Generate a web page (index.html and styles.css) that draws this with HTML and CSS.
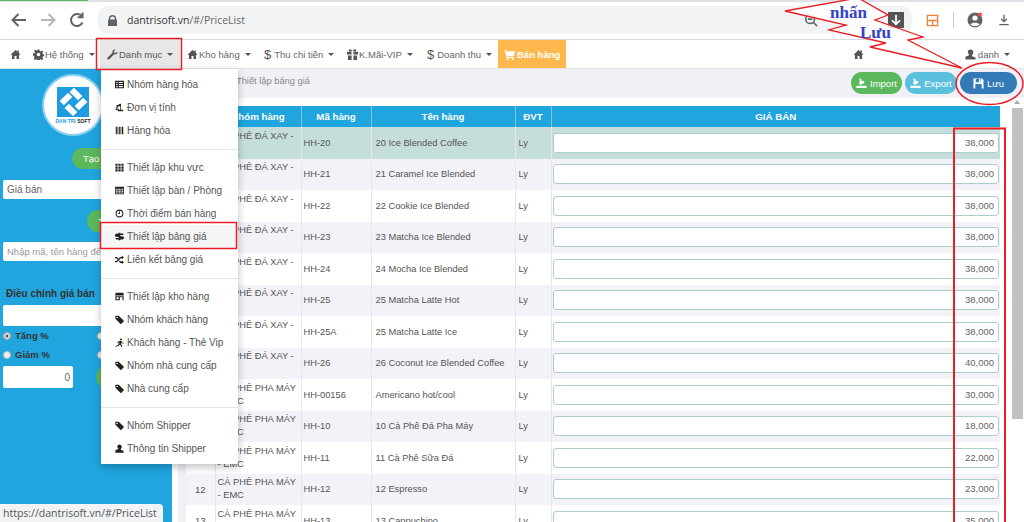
FILE: index.html
```html
<!DOCTYPE html>
<html lang="vi">
<head>
<meta charset="utf-8">
<title>PriceList</title>
<link rel="stylesheet" href="styles.css">
</head>
<body>
<svg class="defs" width="0" height="0">
  <symbol id="i-home" viewBox="0 0 12 12"><path d="M6 1 .5 6.200h1.600V11h2.800V7.600h2.200V11h2.800V6.200h1.600L9.600 4V1.600H8.200v1.100z"/></symbol>
  <symbol id="i-gear" viewBox="0 0 12 12"><path fill-rule="evenodd" d="M5 .5h2l.3 1.600 1.100.5 1.400-.9 1.400 1.400-.9 1.400.5 1.100 1.600.3v2l-1.600.3-.5 1.100.9 1.400-1.400 1.400-1.400-.9-1.100.5-.3 1.600H5l-.3-1.600-1.100-.5-1.400.9-1.400-1.400.9-1.400-.5-1.100L0 7V5l1.600-.3.5-1.100-.9-1.400 1.400-1.400 1.400.9 1.100-.5zM6 4a2 2 0 1 0 0 4 2 2 0 0 0 0-4z"/></symbol>
  <symbol id="i-wrench" viewBox="0 0 12 12"><path d="M11.500 2.600 9.600 4.400 8 4 7.600 2.400 9.400.6C7.800 0 6 1 5.900 2.800c0 .5 0 .9.2 1.200L.7 9.400c-.5.5-.5 1.200 0 1.700s1.200.5 1.700 0L7.900 5.800c1.900.6 4.200-1.200 3.600-3.200z"/></symbol>
  <symbol id="i-gift" viewBox="0 0 12 12"><path d="M0 3h5v3H0zM7 3h5v3H7zM1 7h4v5H1zM7 7h4v5H7zM2 .5h2.500L6 2.500 7.500.5H10v2H2z"/></symbol>
  <symbol id="i-cart" viewBox="0 0 12 12"><path d="M0 1h2l.4 1.500H12l-1.200 5H3.600l.3 1H10.500V9.800H2.800L1.100 2.300H0z"/><circle cx="4" cy="10.800" r="1.100"/><circle cx="9.500" cy="10.800" r="1.100"/></symbol>
  <symbol id="i-user" viewBox="0 0 12 12"><path d="M6 .5c1.900 0 3 1.400 3 3.300 0 1.300-.6 2.400-1.300 3v1l3.800 1.600v2.100H.5V8.400l3.800-1.600v-1C3.600 5.200 3 4.100 3 3.800 3 1.900 4.100.5 6 .5z"/></symbol>
  <symbol id="i-list" viewBox="0 0 12 12"><path fill-rule="evenodd" d="M0 1h12v10H0zM1.500 2.500v1.500h2V2.500zm3.500 0v1.500h5.500V2.500zM1.500 5.300v1.500h2V5.300zm3.500 0v1.500h5.500V5.300zM1.500 8v1.500h2V8zM5 8v1.500h5.500V8z"/></symbol>
  <symbol id="i-scale" viewBox="0 0 12 12"><path d="M7 1h1v8h3v2H4V9h3V4L3.500 5l1.500 3.500C5 10 1 10 .5 8.500L2.300 4.500 1.500 3.500zM2.800 5.500 1.700 8.200h2.200z"/></symbol>
  <symbol id="i-barcode" viewBox="0 0 12 12"><path d="M1 1h1.500v10H1zM3.300 1h.8v10h-.8zM5 1h1.500v10H5zM7.300 1h.8v10h-.8zM9 1h2v10H9z"/></symbol>
  <symbol id="i-grid" viewBox="0 0 12 12"><path d="M.5 1h3v2.800h-3zM4.500 1h3v2.800h-3zM8.500 1h3v2.800h-3zM.5 4.700h3v2.800h-3zM4.500 4.700h3v2.800h-3zM8.500 4.700h3v2.800h-3zM.5 8.400h3v2.800h-3zM4.500 8.400h3v2.800h-3zM8.500 8.400h3v2.800h-3z"/></symbol>
  <symbol id="i-table" viewBox="0 0 12 12"><path fill-rule="evenodd" d="M0 1h12v10H0zM1 3.500V5h2.500V3.500zm3.500 0V5h3V3.500zm4 0V5H11V3.500zM1 6v1.500h2.500V6zm3.500 0v1.500h3V6zm4 0v1.500H11V6zM1 8.500V10h2.500V8.500zm3.500 0V10h3V8.500zm4 0V10H11V8.500z"/></symbol>
  <symbol id="i-clock" viewBox="0 0 12 12"><path fill-rule="evenodd" d="M6 .8a5.200 5.200 0 1 1 0 10.400A5.200 5.200 0 0 1 6 .8zm0 1.400a3.800 3.800 0 1 0 0 7.600 3.800 3.800 0 0 0 0-7.600zM5.400 3h1.200v3.600H3.800V5.500h1.600z"/></symbol>
  <symbol id="i-usd" viewBox="0 0 12 12"><path fill-rule="evenodd" d="M5 1h2v1.100h2.500c1.200 0 2 .8 2 1.900H7v1.500h2.500c1.500 0 2.500 1 2.500 2.200S11 10 9.500 10H7v1H5v-1H2.500C1.200 10 .5 9.200.5 8H5V6.500H2.500C1 6.500 0 5.500 0 4.300S1 2.100 2.500 2.100H5z"/></symbol>
  <symbol id="i-shuffle" viewBox="0 0 12 12"><path d="M0 2.500h2.500L4.800 5 3.700 6.200 1.900 4.300H0zM9 .8l3 2.500L9 5.800V4.300H7.800L2.500 9.700H0V7.900h1.800l5.300-5.400H9zM6.200 7.200l1.600 1.500H9V7.200l3 2.500-3 2.500v-1.500H7L5.100 8.400z"/></symbol>
  <symbol id="i-store" viewBox="0 0 12 12"><path fill-rule="evenodd" d="M1 1h10l1 3.500H0zM.5 5.500h11V11H.5zm1.500 1.500V9.500h3V7zm4.500 0V11H10V7z"/></symbol>
  <symbol id="i-tag" viewBox="0 0 12 12"><path d="M.5 1H5l6.500 6.300c.4.400.4 1 0 1.400L8.500 11.600c-.4.400-1 .4-1.400 0L.5 5zM2.800 2.200a1 1 0 1 0 0 2 1 1 0 0 0 0-2z"/></symbol>
  <symbol id="i-runner" viewBox="0 0 12 12"><path d="M8 .8a1.300 1.300 0 1 1 0 2.600A1.300 1.300 0 0 1 8 .8zM5 4h3.500l.8 1.800L11.500 6.500v1L8.500 6.800 7.800 8.300 9.500 9.500V12H8.300V10.200L6 9 4.800 10.500.5 11.500V10.500L4 9.300 6 5.300H5.500L3.800 7H2.500z"/></symbol>
  <symbol id="i-import" viewBox="0 0 12 12"><path d="M.5 8.500h11V11H.5zM3.500 1l2-.5L6.500 3.500 9 3v2.500L4.500 7.500 3 4.500l1.500-.5z"/></symbol>
  <symbol id="i-save" viewBox="0 0 12 12"><path fill-rule="evenodd" d="M.5.500h9.300L11.500 2.200v9.300H.5zM3 1v3.700h5.500V1zM2.500 6.500v5h7v-5zM6.500 1.300H8v3H6.500z"/></symbol>
</svg>

<header class="chrome">
  <div class="tabline"><span class="progress"></span></div>
  <div class="toolbar">
    <svg class="cicon" viewBox="0 0 20 20"><path d="M17 10H4M9.500 4 3.500 10l6 6" fill="none" stroke="#5f6368" stroke-width="2"/></svg>
    <svg class="cicon" viewBox="0 0 20 20"><path d="M3 10h13M10.500 4l6 6-6 6" fill="none" stroke="#b4b6b9" stroke-width="2"/></svg>
    <svg class="cicon" viewBox="0 0 20 20"><path d="M15.500 12.500a6 6 0 1 1-.6-6M15.500 2.500v4.800h-4.800" fill="none" stroke="#5f6368" stroke-width="2"/></svg>
    <div class="omnibox">
      <svg class="lock" viewBox="0 0 10 12"><path fill-rule="evenodd" d="M1 5V4a4 4 0 0 1 8 0v1h1v7H0V5zm1.500 0h5V4a2.500 2.500 0 0 0-5 0z" fill="#5f6368"/></svg>
      <span class="url">dantrisoft.vn<span class="urlpath">/#/PriceList</span></span>
      <svg class="zoomi" viewBox="0 0 16 16"><circle cx="7" cy="7" r="5" fill="none" stroke="#5f6368" stroke-width="1.800"/><path d="M10.500 10.500 15 15M4.500 7h5" stroke="#5f6368" stroke-width="1.800"/></svg>
      <span class="dl-box"><svg viewBox="0 0 16 16"><path d="M8 2v11M3.500 8.500 8 13l4.500-4.500" fill="none" stroke="#fff" stroke-width="2"/></svg></span>
    </div>
    <div class="exts">
      <svg class="ext" viewBox="0 0 14 14"><path d="M1.500 1.500h11v11h-11zM1.500 7h11M7 7v5.500" fill="none" stroke="#f4803a" stroke-width="1.500"/></svg>
      <span class="sep"></span>
      <svg class="avatar" viewBox="0 0 16 16"><circle cx="8" cy="8" r="7.500" fill="#5f6368"/><circle cx="8" cy="6" r="2.600" fill="#fff"/><path d="M3.300 12.500c1.500-2.500 7.900-2.500 9.400 0-2.500 2.300-6.900 2.300-9.400 0z" fill="#fff"/><circle cx="13" cy="2.500" r="2" fill="#f44"/></svg>
      <svg class="dlr" viewBox="0 0 14 14"><path d="M7 1v8M3.500 5.500 7 9l3.500-3.500M1.500 12.500h11" fill="none" stroke="#5f6368" stroke-width="1.500"/></svg>
    </div>
  </div>
</header>

<nav class="nav">
  <a class="nav-home"><svg class="ni"><use href="#i-home"/></svg></a>
  <a class="nav-item w-sys"><svg class="ni"><use href="#i-gear"/></svg>Hệ thống<b class="caret"></b></a>
  <a class="nav-item w-cat active"><svg class="ni"><use href="#i-wrench"/></svg>Danh mục<b class="caret"></b></a>
  <a class="nav-item w-cat"><svg class="ni"><use href="#i-home"/></svg>Kho hàng<b class="caret"></b></a>
  <a class="nav-item w-cash"><span class="dollar">$</span>Thu chi tiền<b class="caret"></b></a>
  <a class="nav-item w-vip"><svg class="ni"><use href="#i-gift"/></svg>K.Mãi-VIP<b class="caret"></b></a>
  <a class="nav-item w-rev"><span class="dollar">$</span>Doanh thu<b class="caret"></b></a>
  <a class="nav-sale"><svg class="ni"><use href="#i-cart"/></svg>Bán hàng</a>
  <div class="nav-right">
    <a class="nav-home"><svg class="ni"><use href="#i-home"/></svg></a>
    <a class="nav-user"><svg class="ni"><use href="#i-user"/></svg>danh<b class="caret"></b></a>
  </div>
</nav>

<main class="main">
  <aside class="side">
    <div class="logo">
      <div class="logo-mark">
        <svg viewBox="0 0 32 30"><g fill="#fff"><rect x="13" y="4" width="12" height="6" transform="rotate(45 19 7)"/><rect x="3" y="9" width="12" height="6" transform="rotate(-45 9 12)"/><rect x="18" y="14" width="12" height="6" transform="rotate(-45 24 17)"/><rect x="8" y="20" width="12" height="6" transform="rotate(45 14 23)"/></g></svg>
      </div>
      <span class="logo-text">DAN TRI <b>SOFT</b></span>
    </div>
    <div class="side-btn tao">Tạo bảng giá</div>
    <div class="field">Giá bán</div>
    <div class="side-btn second">Thêm</div>
    <div class="field search">Nhập mã, tên hàng để tìm</div>
    <div class="adj-title">Điều chỉnh giá bán</div>
    <div class="field blank"></div>
    <div class="radio-row"><span class="radio on"></span><span class="rlabel">Tăng %</span><span class="radio alt"></span></div>
    <div class="radio-row"><span class="radio"></span><span class="rlabel">Giảm %</span><span class="radio alt"></span></div>
    <div class="adj-row"><div class="field num">0</div><span class="go"></span></div>
  </aside>

  <section class="content">
    <div class="topband">
      <span class="crumb">Thiết lập bảng giá</span>
      <div class="actions">
        <a class="pill import"><svg class="pi"><use href="#i-import"/></svg>Import</a>
        <a class="pill export"><svg class="pi"><use href="#i-import"/></svg>Export</a>
        <a class="pill save"><svg class="pi"><use href="#i-save"/></svg>Lưu</a>
      </div>
    </div>
    <div class="table-area">
      <table class="grid">
        <colgroup><col class="c1"><col class="c2"><col class="c3"><col class="c4"><col class="c5"><col class="c6"></colgroup>
        <thead><tr><th>STT</th><th>Nhóm hàng</th><th>Mã hàng</th><th>Tên hàng</th><th>ĐVT</th><th>GIÁ BÁN</th></tr></thead>
        <tbody>
          <tr class="sel"><td class="n">1</td><td class="g">CÀ PHÊ ĐÁ XAY - EMC</td><td class="m">HH-20</td><td class="t">20 Ice Blended Coffee</td><td class="u">Ly</td><td class="p"><div class="price">38,000</div></td></tr>
          <tr><td class="n">2</td><td class="g">CÀ PHÊ ĐÁ XAY - EMC</td><td class="m">HH-21</td><td class="t">21 Caramel Ice Blended</td><td class="u">Ly</td><td class="p"><div class="price">38,000</div></td></tr>
          <tr><td class="n">3</td><td class="g">CÀ PHÊ ĐÁ XAY - EMC</td><td class="m">HH-22</td><td class="t">22 Cookie Ice Blended</td><td class="u">Ly</td><td class="p"><div class="price">38,000</div></td></tr>
          <tr><td class="n">4</td><td class="g">CÀ PHÊ ĐÁ XAY - EMC</td><td class="m">HH-23</td><td class="t">23 Matcha Ice Blended</td><td class="u">Ly</td><td class="p"><div class="price">38,000</div></td></tr>
          <tr><td class="n">5</td><td class="g">CÀ PHÊ ĐÁ XAY - EMC</td><td class="m">HH-24</td><td class="t">24 Mocha Ice Blended</td><td class="u">Ly</td><td class="p"><div class="price">38,000</div></td></tr>
          <tr><td class="n">6</td><td class="g">CÀ PHÊ ĐÁ XAY - EMC</td><td class="m">HH-25</td><td class="t">25 Matcha Latte Hot</td><td class="u">Ly</td><td class="p"><div class="price">38,000</div></td></tr>
          <tr><td class="n">7</td><td class="g">CÀ PHÊ ĐÁ XAY - EMC</td><td class="m">HH-25A</td><td class="t">25 Matcha Latte Ice</td><td class="u">Ly</td><td class="p"><div class="price">38,000</div></td></tr>
          <tr><td class="n">8</td><td class="g">CÀ PHÊ ĐÁ XAY - EMC</td><td class="m">HH-26</td><td class="t">26 Coconut Ice Blended Coffee</td><td class="u">Ly</td><td class="p"><div class="price">40,000</div></td></tr>
          <tr><td class="n">9</td><td class="g">CÀ PHÊ PHA MÁY - EMC</td><td class="m">HH-00156</td><td class="t">Americano hot/cool</td><td class="u">Ly</td><td class="p"><div class="price">30,000</div></td></tr>
          <tr><td class="n">10</td><td class="g">CÀ PHÊ PHA MÁY - EMC</td><td class="m">HH-10</td><td class="t">10 Cà Phê Đá Pha Máy</td><td class="u">Ly</td><td class="p"><div class="price">18,000</div></td></tr>
          <tr><td class="n">11</td><td class="g">CÀ PHÊ PHA MÁY - EMC</td><td class="m">HH-11</td><td class="t">11 Cà Phê Sữa Đá</td><td class="u">Ly</td><td class="p"><div class="price">22,000</div></td></tr>
          <tr><td class="n">12</td><td class="g">CÀ PHÊ PHA MÁY - EMC</td><td class="m">HH-12</td><td class="t">12 Espresso</td><td class="u">Ly</td><td class="p"><div class="price">23,000</div></td></tr>
          <tr><td class="n">13</td><td class="g">CÀ PHÊ PHA MÁY - EMC</td><td class="m">HH-13</td><td class="t">13 Cappuchino</td><td class="u">Ly</td><td class="p"><div class="price">35,000</div></td></tr>
        </tbody>
      </table>
      <div class="scrollbar"><span class="arrow"></span><span class="thumb"></span></div>
    </div>
  </section>
</main>

<ul class="menu">
  <li><svg class="mi"><use href="#i-list"/></svg>Nhóm hàng hóa</li>
  <li><svg class="mi"><use href="#i-scale"/></svg>Đơn vị tính</li>
  <li><svg class="mi"><use href="#i-barcode"/></svg>Hàng hóa</li>
  <li class="divider"></li>
  <li><svg class="mi"><use href="#i-grid"/></svg>Thiết lập khu vực</li>
  <li><svg class="mi"><use href="#i-table"/></svg>Thiết lập bàn / Phòng</li>
  <li><svg class="mi"><use href="#i-clock"/></svg>Thời điểm bán hàng</li>
  <li class="hover"><svg class="mi"><use href="#i-usd"/></svg>Thiết lập bảng giá</li>
  <li><svg class="mi"><use href="#i-shuffle"/></svg>Liên kết bảng giá</li>
  <li class="divider"></li>
  <li><svg class="mi"><use href="#i-store"/></svg>Thiết lập kho hàng</li>
  <li><svg class="mi"><use href="#i-tag"/></svg>Nhóm khách hàng</li>
  <li><svg class="mi"><use href="#i-runner"/></svg>Khách hàng - Thẻ Vip</li>
  <li><svg class="mi"><use href="#i-tag"/></svg>Nhóm nhà cung cấp</li>
  <li><svg class="mi"><use href="#i-tag"/></svg>Nhà cung cấp</li>
  <li class="divider"></li>
  <li><svg class="mi"><use href="#i-tag"/></svg>Nhóm Shipper</li>
  <li><svg class="mi"><use href="#i-user"/></svg>Thông tin Shipper</li>
</ul>

<div class="status">https://dantrisoft.vn/#/PriceList</div>

<svg class="marks" width="1024" height="522" viewBox="0 0 1024 522">
  <rect x="96.500" y="38.500" width="85" height="31" fill="none" stroke="#ed1c24" stroke-width="1.500"/>
  <rect x="100.500" y="222.500" width="136" height="26" fill="none" stroke="#ed1c24" stroke-width="1.500"/>
  <rect x="954" y="128.500" width="51" height="400" fill="none" stroke="#ed1c24" stroke-width="2"/>
  <ellipse cx="989.500" cy="83.500" rx="33.500" ry="21" fill="none" stroke="#ed1c24" stroke-width="1.500"/>
  <polygon points="785,11 852,-1 860,-1 888,15 875,20 923,37 908,40 962,68 870,47 886,43 829,30 846,25" fill="#fff" fill-opacity=".88" stroke="#ed1c24" stroke-width="1.300"/>
  <text class="note" x="830" y="18">nhấn</text>
  <text class="note" x="860" y="38">Lưu</text>
</svg>
</body>
</html>
```

FILE: styles.css
```css
* { box-sizing: border-box; }
html, body { margin: 0; height: 522px; overflow: hidden; }
body {
  position: relative;
  display: flex;
  flex-direction: column;
  width: 1024px;
  font-family: "Liberation Sans", Arial, sans-serif;
  font-size: 10px;
  color: #555;
  background: #fff;
}
.defs { position: absolute; }

/* browser chrome */
.chrome { height: 40px; flex: none; border-bottom: 1px solid #d9d9d9; background: #fff; }
.tabline { height: 2px; background: #dee1e6; }
.progress { display: block; width: 88px; height: 1px; background: #5fb85a; }
.toolbar { display: flex; align-items: center; height: 37px; padding: 0 0 1px 9px; gap: 9px; }
.cicon { width: 20px; height: 20px; flex: none; }
.omnibox {
  display: flex; align-items: center;
  width: 814px; height: 28px; margin-left: 2px;
  padding: 0 8px 0 10px;
  background: #f1f3f4; border-radius: 10px;
}
.lock { width: 9px; height: 11px; margin-right: 10px; flex: none; }
.url { font-family: "Open Sans", sans-serif; font-size: 10.500px; color: #333; }
.urlpath { color: #666; }
.zoomi { width: 14px; height: 14px; margin-left: auto; margin-right: 70px; }
.dl-box { display: flex; width: 16px; height: 16px; background: #555; padding: 1px; }
.dl-box svg { width: 14px; height: 14px; }
.exts { display: flex; align-items: center; flex: 1; padding-left: 5px; }
.ext { width: 13px; height: 13px; }
.sep { width: 1px; height: 16px; background: #ccc; margin: 0 13px 0 14px; }
.avatar { width: 16px; height: 16px; }
.dlr { width: 12px; height: 14px; margin-left: 15px; }

/* app navigation */
.nav {
  display: flex; align-items: stretch; flex: none;
  height: 29px; padding-left: 8px;
  background: #fff; border-bottom: 1px solid #e3e3e3;
  font-size: 9.500px; color: #666;
}
.nav a { display: flex; align-items: center; white-space: nowrap; }
.ni { width: 11px; height: 11px; fill: #555; margin-right: 1px; flex: none; }
.nav-home { width: 25px; padding-left: 2px; }
.nav-item { flex: none; }
.w-sys { width: 67px; }
.w-cat { width: 80px; padding-left: 7px; }
.w-cash { width: 83px; padding-left: 4px; }
.w-vip { width: 80px; padding-left: 4px; }
.w-rev { width: 75px; padding-left: 4px; }
.nav-item.active { background: #e7e7e7; color: #555; }
.dollar { font-size: 13px; margin-right: 3px; color: #555; }
.caret {
  display: inline-block; margin-left: 5px;
  border-top: 3px solid #555; border-left: 3px solid transparent; border-right: 3px solid transparent;
}
.nav-sale { width: 68px; padding-left: 6px; background: #ffb84d; color: #fff; font-weight: bold; }
.nav-sale .ni { fill: #fff; margin-right: 2px; }
.nav-right { display: flex; margin-left: auto; }
.nav-right .nav-home { width: 22px; margin-right: 92px; }
.nav-user { padding-right: 14px; }
.nav-user .ni { margin-right: 2px; }

/* main */
.main { display: flex; flex: 1; min-height: 0; }
.side {
  width: 172px; flex: none; padding: 7px 3px 0 3px;
  background: #20a5de; color: #555;
  overflow: hidden;
}
.logo {
  width: 58px; height: 58px; margin: 0 0 0 41px;
  background: #fff; border-radius: 50%;
  box-shadow: 0 0 0 2px #8ad2f0;
  display: flex; flex-direction: column; align-items: center; padding-top: 11px;
}
.logo-mark { width: 32px; height: 30px; background: #1f9be0; flex: none; }
.logo-mark svg { display: block; width: 32px; height: 30px; }
.logo-text { font-size: 5px; font-weight: bold; color: #1f9be0; white-space: nowrap; margin-top: 1px; }
.logo-text b { color: #222; }
.side-btn {
  height: 21px; border-radius: 11px; background: #5cb85c; color: #fff;
  display: flex; align-items: center; padding-left: 11px; font-size: 9.500px;
}
.tao { margin: 14px 0 0 69px; }
.second { margin: 11px 0 0 84px; height: 22px; }
.field {
  height: 19px; background: #fff; border-radius: 2px;
  display: flex; align-items: center; padding: 0 4px;
  color: #666; font-size: 10px;
}
.tao + .field { margin-top: 11px; }
.search { margin-top: 10px; color: #999; font-size: 9.500px; white-space: nowrap; overflow: hidden; }
.adj-title { margin: 27px 0 0 3px; font-weight: bold; color: #333; line-height: 12px; }
.blank { margin-top: 5px; height: 21px; }
.radio-row { display: flex; align-items: center; height: 19px; font-weight: bold; color: #333; }
.radio { width: 8px; height: 8px; border-radius: 50%; background: #eee; border: 1px solid #bbb; flex: none; }
.radio.on { background: #555; box-shadow: inset 0 0 0 1.500px #eee; }
.rlabel { margin-left: 4px; width: 36px; font-size: 9.500px; white-space: nowrap; }
.radio.alt { margin-left: 46px; }
.adj-row { display: flex; margin-top: 2px; align-items: center; }
.num { width: 70px; height: 22px; justify-content: flex-end; padding-right: 3px; }
.go { width: 22px; height: 22px; border-radius: 50%; background: #5cb85c; margin-left: 23px; }

.content { flex: 1; min-width: 0; display: flex; flex-direction: column; }
.topband {
  display: flex; align-items: flex-start; flex: none;
  height: 29px; padding: 3px 7px 0 64px;
  background: #f0f0f6;
}
.crumb { color: #888; font-size: 9.300px; line-height: 18px; }
.actions { display: flex; gap: 3px; margin-left: auto; }
.pill {
  display: flex; align-items: center; justify-content: center;
  height: 22px; border-radius: 11px; color: #fff;
  font-size: 9.500px;
}
.pi { width: 11px; height: 11px; fill: #fff; margin-right: 3px; }
.import { width: 51px; background: #5cb85c; }
.export { width: 52px; background: #5bc0de; }
.save { width: 57px; background: #337ab7; }

.table-area {
  flex: 1; min-height: 0;
  display: flex; padding: 8px 0 0 14px; overflow: hidden;
  background: linear-gradient(#fff, #fff) top / 100% 8px no-repeat,
              linear-gradient(to right, #fff 6px, #f0f0f6 6px, #f0f0f6 14px, #fff 14px);
}
.grid {
  table-layout: fixed; border-collapse: collapse;
  width: 814px; flex: none; align-self: flex-start;
  font-size: 9.300px; color: #555;
}
.c1 { width: 29px; } .c2 { width: 86px; } .c3 { width: 70px; }
.c4 { width: 144px; } .c5 { width: 36px; } .c6 { width: 449px; }
.grid th {
  height: 21px; padding: 0; background: #20a5de; color: #fff;
  font-size: 9.700px; font-weight: bold; text-align: center;
  border-left: 1px solid #79c6e8;
}
.grid th:first-child { border-left: 0; }
.grid tbody tr { height: 31.500px; background: #fff; }
.grid tbody tr:nth-child(even) { background: #f2f2f8; }
.grid tbody tr.sel { background: #c5dedc; }
.grid td { padding: 0 4px; border-left: 1px solid #e6e6ee; vertical-align: middle; overflow: hidden; }
.grid td:first-child { border-left: 0; }
.grid td.n { text-align: center; font-size: 9.500px; }
.grid td.g { padding: 0 0 0 2px; line-height: 13px; }
.grid td.m { padding-left: 2px; }
.grid td.u { padding-left: 3px; }
.grid td.p { padding: 0 1px 0 1px; }
.price {
  height: 20px; line-height: 18px; text-align: right; padding-right: 4px;
  background: #fff; border: 1px solid #a9cfcd; border-radius: 3px;
  font-size: 9.500px; color: #666;
}
.scrollbar { position: relative; flex: none; width: 24px; height: 100%; margin-top: -8px; }
.arrow {
  position: absolute; top: 2px; left: 14px;
  border-bottom: 4px solid #aaa; border-left: 3px solid transparent; border-right: 3px solid transparent;
}
.thumb { position: absolute; top: 10px; left: 12px; width: 11px; height: 311px; background: #c1c1c1; }

/* dropdown */
.menu {
  position: absolute; left: 101px; top: 69px;
  width: 137px; height: 395px; margin: 0; padding: 4px 0 0;
  list-style: none; background: #fff;
  box-shadow: 0 3px 8px rgba(0,0,0,.25);
  font-size: 10px; color: #555;
}
.menu li { display: flex; align-items: center; height: 23px; padding-left: 14px; white-space: nowrap; }
.menu li.divider { height: 1px; padding: 0; margin: 6.500px 0; background: #e5e5e5; }
.menu li.hover { background: #f5f5f5; }
.mi { width: 9px; height: 9px; margin-right: 3px; fill: #222; flex: none; }

.status {
  position: absolute; left: 0; bottom: 0;
  width: 163px; height: 18px; padding: 2px 0 0 3px;
  background: #f1f3f4; border-top-right-radius: 4px;
  font-family: "Open Sans", sans-serif; font-size: 10.500px; line-height: 15px; color: #555;
  white-space: nowrap;
}

/* hand-drawn annotations */
.marks { position: absolute; left: 0; top: 0; pointer-events: none; }
.note { font-family: "Liberation Serif", serif; font-weight: bold; font-size: 17px; fill: #3443c8; }
```
